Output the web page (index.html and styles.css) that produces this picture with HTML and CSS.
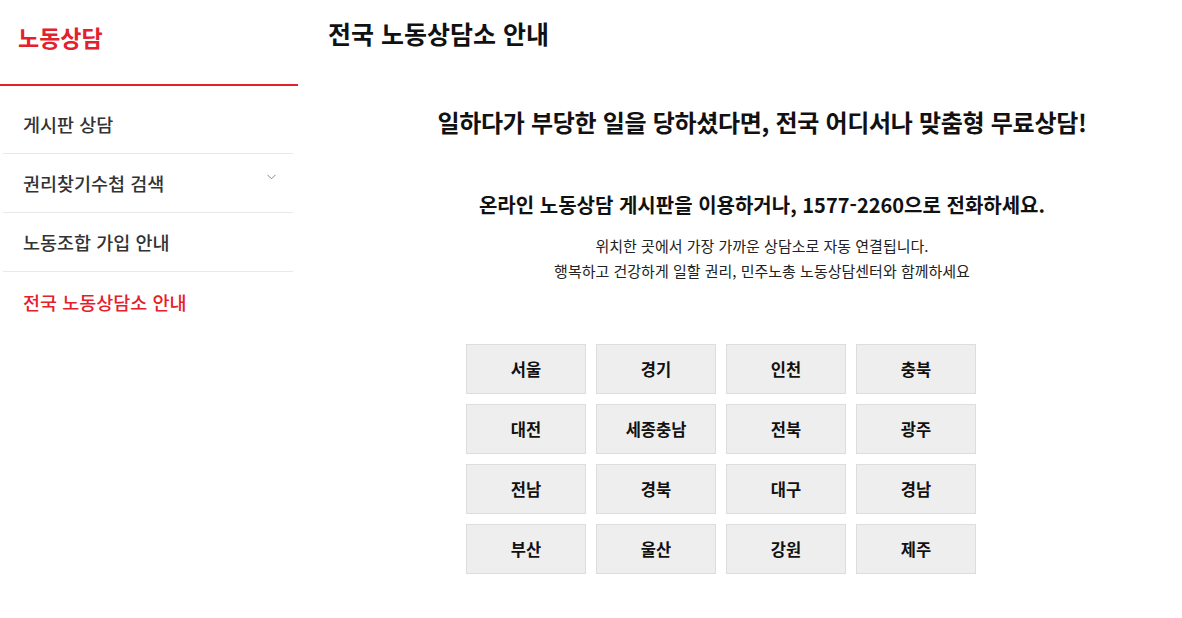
FILE: index.html
```html
<!DOCTYPE html>
<html lang="ko">
<head>
<meta charset="utf-8">
<title>전국 노동상담소 안내</title>
<link rel="stylesheet" href="styles.css">
</head>
<body>
<div class="page">
  <aside class="sidebar">
    <div class="logo">노동상담</div>
    <ul class="nav">
      <li class="nav-item">게시판 상담</li>
      <li class="nav-item has-sub">권리찾기수첩 검색
        <svg class="chev" width="9" height="6" viewBox="0 0 9 6"><path d="M0.5 0.8 L4.5 4.8 L8.5 0.8" fill="none" stroke="#888" stroke-width="1"/></svg>
      </li>
      <li class="nav-item">노동조합 가입 안내</li>
      <li class="nav-item active">전국 노동상담소 안내</li>
    </ul>
  </aside>
  <main class="main">
    <h1 class="title">전국 노동상담소 안내</h1>
    <section class="content">
      <h2 class="headline">일하다가 부당한 일을 당하셨다면, 전국 어디서나 맞춤형 무료상담!</h2>
      <h3 class="subhead">온라인 노동상담 게시판을 이용하거나, 1577-2260으로 전화하세요.</h3>
      <p class="desc">위치한 곳에서 가장 가까운 상담소로 자동 연결됩니다.<br>행복하고 건강하게 일할 권리, 민주노총 노동상담센터와 함께하세요</p>
      <div class="grid">
        <div class="cell">서울</div>
        <div class="cell">경기</div>
        <div class="cell">인천</div>
        <div class="cell">충북</div>
        <div class="cell">대전</div>
        <div class="cell">세종충남</div>
        <div class="cell">전북</div>
        <div class="cell">광주</div>
        <div class="cell">전남</div>
        <div class="cell">경북</div>
        <div class="cell">대구</div>
        <div class="cell">경남</div>
        <div class="cell">부산</div>
        <div class="cell">울산</div>
        <div class="cell">강원</div>
        <div class="cell">제주</div>
      </div>
    </section>
  </main>
</div>
</body>
</html>
```
FILE: styles.css
```css
* { box-sizing: border-box; }
html, body { margin: 0; padding: 0; background: #fff; }
body {
  font-family: "Noto Sans CJK KR", "Noto Sans", sans-serif;
  color: #111;
}
.page { display: flex; align-items: flex-start; }
.sidebar { width: 298px; flex: none; }
.logo {
  border-bottom: 2px solid #e5202d;
  box-sizing: content-box;
  padding-left: 18px;
  padding-top: 21px;
  height: 63px;
  font-size: 23px;
  font-weight: 700;
  color: #e5202d;
  line-height: 32px;
}
.nav { list-style: none; margin: 9px 5px 0 3px; padding: 0; }
.nav-item {
  position: relative;
  height: 59px;
  padding-left: 20px;
  display: flex;
  align-items: center;
  font-size: 18.5px;
  font-weight: 500;
  color: #333;
  border-bottom: 1px solid #e8e8e8;
}
.nav-item.active { color: #e5202d; border-bottom: none; }
.chev { position: absolute; right: 17px; top: 20px; }
.main { flex: 1; padding-left: 30px; }
.title {
  margin: 0;
  padding-top: 15px;
  height: 84px;
  font-size: 25px;
  line-height: 36px;
  font-weight: 700;
  color: #111;
}
.content { padding-left: 14px; text-align: center; }
.headline {
  margin: 21px 0 0;
  font-size: 24px;
  line-height: 34px;
  font-weight: 700;
  letter-spacing: -0.3px;
  color: #111;
}
.subhead {
  margin: 52px 0 0;
  font-size: 20px;
  line-height: 28px;
  font-weight: 700;
  color: #111;
}
.desc {
  margin: 14px 0 0;
  font-size: 15px;
  line-height: 25px;
  color: #222;
}
.grid {
  width: 592px;
  margin: 61px auto 0;
  display: grid;
  grid-template-columns: repeat(4, 120px);
  gap: 10px;
}
.cell {
  height: 50px;
  background: #eee;
  border: 1px solid #ddd;
  display: flex;
  align-items: center;
  justify-content: center;
  font-size: 16.5px;
  font-weight: 700;
  color: #111;
}
```
